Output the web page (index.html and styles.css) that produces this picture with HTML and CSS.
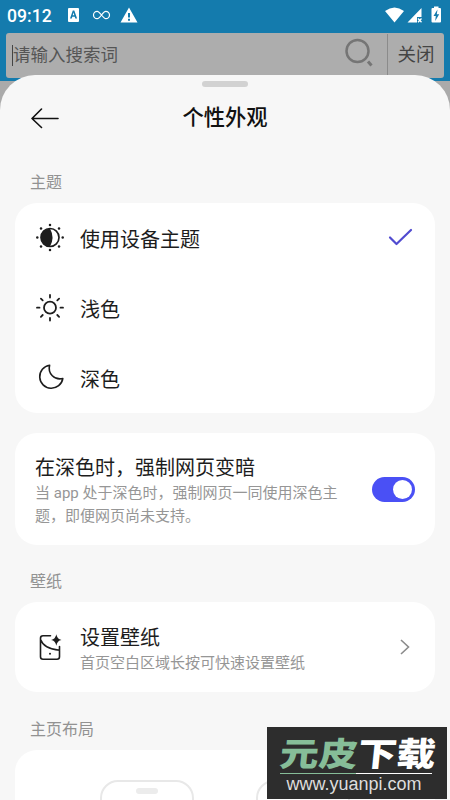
FILE: index.html
```html
<!DOCTYPE html>
<html lang="zh-CN">
<head>
<meta charset="utf-8">
<title>个性外观</title>
<link rel="stylesheet" href="styles.css">
</head>
<body>
<div class="screen">
  <header class="top">
    <div class="status">
      <span class="clock">09:12</span>
      <svg class="status-left" width="80" height="20" viewBox="0 0 80 20">
        <path fill="#fff" fill-rule="evenodd" d="M10 3h9q1 0 1 1v12q0 1-1 1H10q-1 0-1-1V4q0-1 1-1Zm3.800 2.500L11 13.500h1.800l.5-1.700h2.500l.5 1.700h1.800l-2.800-8Zm-.1 4.800.8-2.800.8 2.800Z"/>
        <path fill="none" stroke="#fff" stroke-width="1.200" d="M42.500 10c-2-2.500-3-3.700-4.300-3.700a3.700 3.700 0 0 0 0 7.400c3.300 0 5.300-7.400 8.600-7.400a3.700 3.700 0 0 1 0 7.400c-1.300 0-2.300-1.200-4.300-3.700Z"/>
        <path fill="#fff" fill-rule="evenodd" d="M70 2.500 78.500 17.500h-17ZM69 8v4.500h2V8Zm0 5.800v2h2v-2Z"/>
      </svg>
      <svg class="status-right" width="60" height="20" viewBox="0 0 60 20">
        <path fill="#fff" d="M1 6Q10.500-1 20 6L10.500 17.500ZM37.500 3v9H33v5.500H23.500Z"/>
        <path stroke="#fff" stroke-width="1.300" d="m34 13.500 3.500 3.800m0-3.800L34 17.300"/>
        <path fill="#fff" d="M50 1.500h4.500V3H56q1 0 1 1v12.500q0 1-1 1h-7.500q-1 0-1-1V4q0-1 1-1H50Z"/>
        <path fill="#147bad" d="M53.500 4.500 49.500 11h2.300l-.6 5 4-6.800h-2.400Z"/>
      </svg>
    </div>
    <div class="search">
      <span class="caret"></span>
      <span class="hint">请输入搜索词</span>
      <svg class="lens" width="30" height="30" viewBox="0 0 30 30" fill="none" stroke="#757575"><circle cx="13.500" cy="14" r="11" stroke-width="2.500"/><path stroke-width="3" d="m24 24.500 3.500 4"/></svg>
      <span class="close">关闭</span>
    </div>
  </header>
  <main class="sheet">
    <div class="grip"></div>
    <div class="title-bar">
      <svg width="28" height="22" viewBox="0 0 28 22" fill="none" stroke="#111" stroke-width="1.600" stroke-linecap="round" stroke-linejoin="round"><path d="M10.500 2 1 11.500l9.500 9M1 11.500h26"/></svg>
      <h1>个性外观</h1>
    </div>

    <h2 class="label first">主题</h2>
    <section class="card">
      <div class="row">
        <svg class="icon" width="30" height="30" viewBox="0 0 30 30"><circle cx="15" cy="14.500" r="9" fill="none" stroke="#1d1d1d" stroke-width="1.700"/><path fill="#1d1d1d" d="M15 5.500a9 9 0 1 0 0 18q5-9 0-18Z"/><g fill="#1d1d1d"><circle cx="15" cy="2" r="1.250"/><circle cx="24" cy="5.500" r="1.250"/><circle cx="27.700" cy="14.500" r="1.250"/><circle cx="24" cy="23.500" r="1.250"/><circle cx="15" cy="27" r="1.250"/><circle cx="6" cy="23.500" r="1.250"/><circle cx="2.300" cy="14.500" r="1.250"/><circle cx="6" cy="5.500" r="1.250"/></g></svg>
        <span class="name">使用设备主题</span>
        <svg class="check" width="26" height="20" viewBox="0 0 26 20" fill="none" stroke="#514bd0" stroke-width="2.200" stroke-linecap="round" stroke-linejoin="round"><path d="m3 9.500 6.500 6.500L24 2"/></svg>
      </div>
      <div class="row">
        <svg class="icon" width="30" height="30" viewBox="0 0 30 30" fill="none" stroke="#1d1d1d" stroke-width="1.800" stroke-linecap="round"><circle cx="15" cy="14.700" r="6"/><path d="M15 2v2.500M15 25v2.500M2 14.700h2.500M25.500 14.700H28M5.900 5.600l1.800 1.800M22.300 22l1.800 1.800M24.100 5.600l-1.800 1.800M7.700 22l-1.800 1.800"/></svg>
        <span class="name">浅色</span>
      </div>
      <div class="row">
        <svg class="icon" width="30" height="30" viewBox="0 0 30 30" fill="none" stroke="#1d1d1d" stroke-width="1.600" stroke-linejoin="round"><path d="M14.600 2.200A11.600 11.600 0 1 0 27.800 15.500C19.500 17.500 12.500 10.500 14.600 2.200Z"/></svg>
        <span class="name">深色</span>
      </div>
    </section>

    <section class="card force">
      <div>
        <div class="name">在深色时，强制网页变暗</div>
        <p class="desc">当 app 处于深色时，强制网页一同使用深色主<br>题，即便网页尚未支持。</p>
      </div>
      <span class="switch"></span>
    </section>

    <h2 class="label">壁纸</h2>
    <section class="card wallpaper">
      <svg class="icon" width="30" height="30" viewBox="0 0 30 30" fill="none" stroke="#1d1d1d" stroke-width="1.600" stroke-linecap="round"><path d="M15.500 3.800H8q-2.500 0-2.500 2.500v18.500q0 2.500 2.500 2.500h14q2.500 0 2.500-2.500V14.500M5.500 7.500Q9 17 24.500 18.200"/><circle cx="15" cy="21.800" r="1" fill="#1d1d1d" stroke="none"/><path fill="#1d1d1d" stroke="none" d="M21.300 2.300q.9 5 5.200 5.700-4.300.7-5.200 5.700-.9-5-5.200-5.700 4.300-.7 5.200-5.700Z"/></svg>
      <div>
        <div class="name">设置壁纸</div>
        <p class="desc">首页空白区域长按可快速设置壁纸</p>
      </div>
      <svg class="chevron" width="10" height="16" viewBox="0 0 10 16" fill="none" stroke="#8b8b8b" stroke-width="1.600"><path d="m1 1 7.500 7L1 15"/></svg>
    </section>

    <h2 class="label last">主页布局</h2>
    <section class="card layouts">
      <div class="phone"><i></i></div>
      <div class="phone"><i></i></div>
    </section>
  </main>
  <aside class="mark">
    <div class="brand"><span>元皮</span>下载</div>
    <div class="line"></div>
    <div class="url">www.yuanpi.com</div>
  </aside>
</div>
</body>
</html>
```
FILE: styles.css
```css
* { box-sizing: border-box; }
body { margin: 0; font-family: Roboto, "Noto Sans CJK SC", sans-serif; color: #1d1d1d; }
h1, h2, p { margin: 0; font-weight: 400; }
svg { display: block; flex: none; }
.screen { position: relative; width: 450px; height: 800px; overflow: hidden; background: #aaa; }
.top { height: 81px; padding: 0 6px; background: #147bad; }
.status { display: flex; align-items: center; height: 33px; padding: 0 1px; }
.clock { width: 52px; font-size: 17.600px; font-weight: 500; color: #fff; line-height: 30px; height: 32px; }
.status-left { margin-top: -3px; }
.status-right { margin: -3px 0 0 auto; width: 60px; transform: translateX(1px); }
.search { display: flex; align-items: center; height: 45px; padding-left: 6px; border-radius: 3px; background: #adadad; color: #555; }
.caret { width: 1px; height: 21px; background: #444; }
.hint { font-size: 17.500px; line-height: 45px; height: 45px; }
.lens { margin: -7px 13px 0 auto; }
.close { width: 57px; height: 43px; border-left: 1px solid #8b8b8b; font-size: 18.500px; line-height: 43px; text-align: center; color: #444; }
.sheet { height: 760px; margin-top: -6px; padding: 6px 15px 0; position: relative; border-radius: 35px 35px 0 0; background: #f7f7f7; }
.grip { width: 46px; height: 6px; margin: 0 auto; border-radius: 3px; background: #d2d2d2; }
.title-bar { display: grid; grid-template-columns: 28px 1fr 28px; align-items: center; height: 60px; padding: 0 16px; }
.title-bar h1 { font-size: 21.300px; font-weight: 500; text-align: center; line-height: 62px; color: #111; }
.label { height: 57px; padding-left: 15px; font-size: 16px; line-height: 74px; color: #929292; }
.label.first { height: 56px; line-height: 71px; }
.label.last { height: 58px; line-height: 75px; }
.card { border-radius: 22px; background: #fff; }
.row { display: flex; align-items: center; height: 70px; padding: 0 22px 0 20px; }
.icon { margin-right: 15px; }
.name { font-size: 20px; line-height: 30px; transform: translateY(1.500px); }
.check { margin-left: auto; }
.force { display: flex; align-items: center; justify-content: space-between; height: 112px; margin-top: 20px; padding: 0 20px; }
.desc { font-size: 15px; line-height: 23px; color: #969696; white-space: nowrap; transform: translateY(1px); }
.switch { width: 43px; height: 25px; padding: 3px; border-radius: 13px; background: #4a50f5; }
.switch::after { content: ""; display: block; width: 19px; height: 19px; margin-left: auto; border-radius: 50%; background: #fff; }
.wallpaper { display: flex; align-items: center; height: 90px; padding: 0 25px 0 20px; }
.chevron { margin-left: auto; }
.layouts { display: flex; justify-content: center; gap: 62px; height: 110px; padding-top: 30px; }
.phone { width: 94px; height: 160px; padding-top: 6px; border: 2px solid #e8e8e8; border-radius: 18px; }
.phone i { display: block; width: 22px; height: 6px; margin: 0 auto; border-radius: 3px; background: #ececec; }
.mark { position: absolute; left: 267px; top: 727px; width: 180px; height: 72px; padding: 8px 15px 0 13px; background: #2d2d2d; color: #fff; }
.brand { height: 38px; font: 900 33px/35px "Noto Sans CJK SC", sans-serif; white-space: nowrap; transform-origin: 0 50%; transform: scaleX(1.180) skewX(-5deg); }
.brand span { color: #86bd98; }
.line { height: 1px; background: linear-gradient(90deg, #86bd98 50%, #fff 50%); }
.url { margin-left: -4px; font: 18px/20px "Liberation Sans", sans-serif; text-align: center; color: #ddd; }
```
